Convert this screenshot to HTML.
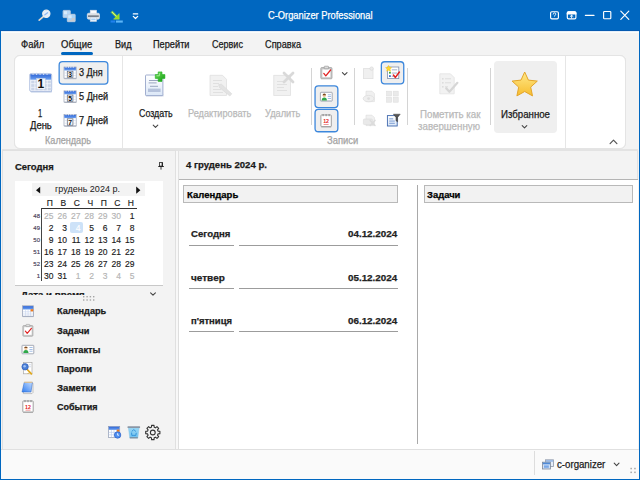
<!DOCTYPE html>
<html><head><meta charset="utf-8"><title>C-Organizer Professional</title>
<style>
html,body{margin:0;padding:0}
body{width:640px;height:480px;overflow:hidden;position:relative;background:#f3f3f3;font-family:"Liberation Sans",sans-serif;}
.a{position:absolute}
.t{position:absolute;white-space:nowrap;line-height:14px;height:14px;transform-origin:0 0;-webkit-text-stroke:0.25px currentColor}
.c{position:absolute;white-space:nowrap;line-height:14px;height:14px;color:#1a1a1a;-webkit-text-stroke:0.15px currentColor}
svg{position:absolute;overflow:visible}
</style></head><body>
<div class="a" style="left:0px;top:0px;width:640px;height:480px;background:#f3f3f3;"></div>
<div class="a" style="left:0px;top:0px;width:640px;height:31px;background:#0067c0;"></div>
<div class="a" style="left:0px;top:30px;width:640px;height:1px;background:#0559b0;"></div>
<div class="a" style="left:1px;top:31px;width:638px;height:1px;background:#e6eff9;"></div>
<div class="a" style="left:1px;top:32px;width:638px;height:1px;background:#fcfcfa;"></div>
<div class="a" style="left:61px;top:52px;width:32px;height:2.5px;background:#0067c0;border-radius:1.5px;"></div>
<div class="a" style="left:2px;top:149.2px;width:636px;height:1.8px;background:#e3e3e3;"></div>
<div class="a" style="left:13.5px;top:55px;width:612px;height:94.3px;background:#e0e0e0;border-radius:6px;"></div>
<div class="a" style="left:13.5px;top:55px;width:612px;height:93.5px;background:#ffffff;border:1px solid #e4e4e4;box-sizing:border-box;border-radius:6px;"></div>
<div class="a" style="left:122px;top:56px;width:1px;height:92px;background:#e6e6e6;"></div>
<div class="a" style="left:565px;top:56px;width:1px;height:92px;background:#e6e6e6;"></div>
<div class="a" style="left:310.5px;top:68px;width:1.2px;height:56.5px;background:#d4d4d4;"></div>
<div class="a" style="left:353.5px;top:68px;width:1.2px;height:56.5px;background:#d4d4d4;"></div>
<div class="a" style="left:407px;top:68px;width:1.2px;height:56.5px;background:#d4d4d4;"></div>
<div class="a" style="left:490px;top:68px;width:1.2px;height:56.5px;background:#d4d4d4;"></div>
<div class="a" style="left:493.75px;top:61px;width:63px;height:71.5px;background:#efefef;border-radius:4px;"></div>
<div class="a" style="left:2px;top:150px;width:174px;height:300px;background:#f3f3f3;border:1px solid #e0e0e0;box-sizing:border-box;"></div>
<div class="a" style="left:176px;top:151px;width:3px;height:299px;background:#f8f8f8;"></div>
<div class="a" style="left:14.5px;top:180.5px;width:148.5px;height:104.5px;background:#ffffff;"></div>
<div class="a" style="left:14.5px;top:285px;width:148.5px;height:1px;background:#c8c8c8;"></div>
<div class="a" style="left:31.5px;top:183px;width:113.5px;height:13.3px;background:#f3f3f3;"></div>
<div class="a" style="left:41px;top:208px;width:96px;height:1px;background:#333;"></div>
<div class="a" style="left:41px;top:208px;width:1px;height:73px;background:#444;"></div>
<div class="a" style="left:70px;top:222px;width:13px;height:11.2px;background:#cde2f8;border-radius:2px;"></div>
<div class="a" style="left:179px;top:151px;width:459px;height:29px;background:#f3f3f3;"></div>
<div class="a" style="left:178.4px;top:151px;width:1px;height:29px;background:#e2e2e2;"></div>
<div class="a" style="left:637.3px;top:151px;width:1px;height:299px;background:#e2e2e2;"></div>
<div class="a" style="left:179px;top:179px;width:459px;height:271px;background:#ffffff;"></div>
<div class="a" style="left:179px;top:179px;width:459px;height:1px;background:#b4b4b4;"></div>
<div class="a" style="left:178.4px;top:179px;width:1px;height:271px;background:#dedede;"></div>
<div class="a" style="left:183.2px;top:185.2px;width:214.6px;height:18.3px;background:#f2f2f2;border:1px solid #b9b9b9;box-sizing:border-box;"></div>
<div class="a" style="left:423.5px;top:185.2px;width:209.5px;height:18.3px;background:#f2f2f2;border:1px solid #b9b9b9;box-sizing:border-box;"></div>
<div class="a" style="left:416.5px;top:185.2px;width:1.6px;height:258.5px;background:#a9a9a9;"></div>
<div class="a" style="left:189px;top:245px;width:44.6px;height:1.1px;background:#9c9c9c;"></div>
<div class="a" style="left:239.4px;top:245px;width:158.4px;height:1.1px;background:#9c9c9c;"></div>
<div class="a" style="left:189px;top:288px;width:44.6px;height:1.1px;background:#9c9c9c;"></div>
<div class="a" style="left:239.4px;top:288px;width:158.4px;height:1.1px;background:#9c9c9c;"></div>
<div class="a" style="left:189px;top:331px;width:44.6px;height:1.1px;background:#9c9c9c;"></div>
<div class="a" style="left:239.4px;top:331px;width:158.4px;height:1.1px;background:#9c9c9c;"></div>
<div class="a" style="left:1px;top:450px;width:638px;height:29px;background:#fafafa;"></div>
<div class="a" style="left:1px;top:448.6px;width:638px;height:1.5px;background:#e0e0e0;"></div>
<div class="a" style="left:533.5px;top:451px;width:1px;height:23.5px;background:#dddddd;"></div>
<svg width="640" height="480" viewBox="0 0 640 480" style="left:0;top:0"><rect x="59.15" y="61.65" width="48.70" height="22.40" rx="3.35" fill="#efefef" stroke="#3c87dc" stroke-width="1.3"/><rect x="315.05" y="85.85" width="22.80" height="21.70" rx="3.35" fill="#efefef" stroke="#3c87dc" stroke-width="1.3"/><rect x="315.05" y="109.35" width="22.80" height="22.40" rx="3.35" fill="#efefef" stroke="#3c87dc" stroke-width="1.3"/><rect x="381.35" y="61.75" width="22.40" height="22.10" rx="3.35" fill="#efefef" stroke="#3c87dc" stroke-width="1.3"/></svg>
<div class="c" style="left:42.90px;top:196px;width:14px;text-align:center;font-size:8.5px">П</div>
<div class="c" style="left:56.40px;top:196px;width:14px;text-align:center;font-size:8.5px">В</div>
<div class="c" style="left:69.90px;top:196px;width:14px;text-align:center;font-size:8.5px">С</div>
<div class="c" style="left:83.40px;top:196px;width:14px;text-align:center;font-size:8.5px">Ч</div>
<div class="c" style="left:96.90px;top:196px;width:14px;text-align:center;font-size:8.5px">П</div>
<div class="c" style="left:110.40px;top:196px;width:14px;text-align:center;font-size:8.5px">С</div>
<div class="c" style="left:123.90px;top:196px;width:14px;text-align:center;font-size:8.5px">Н</div>
<div class="c" style="left:26px;top:209px;width:14px;text-align:right;font-size:6px;color:#4a4058">48</div>
<div class="c" style="left:33.50px;top:209px;width:20px;text-align:right;font-size:8.5px;color:#b4b4b4">25</div>
<div class="c" style="left:47.00px;top:209px;width:20px;text-align:right;font-size:8.5px;color:#b4b4b4">26</div>
<div class="c" style="left:60.50px;top:209px;width:20px;text-align:right;font-size:8.5px;color:#b4b4b4">27</div>
<div class="c" style="left:74.00px;top:209px;width:20px;text-align:right;font-size:8.5px;color:#b4b4b4">28</div>
<div class="c" style="left:87.50px;top:209px;width:20px;text-align:right;font-size:8.5px;color:#b4b4b4">29</div>
<div class="c" style="left:101.00px;top:209px;width:20px;text-align:right;font-size:8.5px;color:#b4b4b4">30</div>
<div class="c" style="left:114.50px;top:209px;width:20px;text-align:right;font-size:8.5px;color:#1a1a1a">1</div>
<div class="c" style="left:26px;top:221px;width:14px;text-align:right;font-size:6px;color:#4a4058">49</div>
<div class="c" style="left:33.50px;top:221px;width:20px;text-align:right;font-size:8.5px;color:#1a1a1a">2</div>
<div class="c" style="left:47.00px;top:221px;width:20px;text-align:right;font-size:8.5px;color:#1a1a1a">3</div>
<div class="c" style="left:60.50px;top:221px;width:20px;text-align:right;font-size:8.5px;color:#ffffff">4</div>
<div class="c" style="left:74.00px;top:221px;width:20px;text-align:right;font-size:8.5px;color:#1a1a1a">5</div>
<div class="c" style="left:87.50px;top:221px;width:20px;text-align:right;font-size:8.5px;color:#1a1a1a">6</div>
<div class="c" style="left:101.00px;top:221px;width:20px;text-align:right;font-size:8.5px;color:#1a1a1a">7</div>
<div class="c" style="left:114.50px;top:221px;width:20px;text-align:right;font-size:8.5px;color:#1a1a1a">8</div>
<div class="c" style="left:26px;top:233px;width:14px;text-align:right;font-size:6px;color:#4a4058">50</div>
<div class="c" style="left:33.50px;top:233px;width:20px;text-align:right;font-size:8.5px;color:#1a1a1a">9</div>
<div class="c" style="left:47.00px;top:233px;width:20px;text-align:right;font-size:8.5px;color:#1a1a1a">10</div>
<div class="c" style="left:60.50px;top:233px;width:20px;text-align:right;font-size:8.5px;color:#1a1a1a">11</div>
<div class="c" style="left:74.00px;top:233px;width:20px;text-align:right;font-size:8.5px;color:#1a1a1a">12</div>
<div class="c" style="left:87.50px;top:233px;width:20px;text-align:right;font-size:8.5px;color:#1a1a1a">13</div>
<div class="c" style="left:101.00px;top:233px;width:20px;text-align:right;font-size:8.5px;color:#1a1a1a">14</div>
<div class="c" style="left:114.50px;top:233px;width:20px;text-align:right;font-size:8.5px;color:#1a1a1a">15</div>
<div class="c" style="left:26px;top:245px;width:14px;text-align:right;font-size:6px;color:#4a4058">51</div>
<div class="c" style="left:33.50px;top:245px;width:20px;text-align:right;font-size:8.5px;color:#1a1a1a">16</div>
<div class="c" style="left:47.00px;top:245px;width:20px;text-align:right;font-size:8.5px;color:#1a1a1a">17</div>
<div class="c" style="left:60.50px;top:245px;width:20px;text-align:right;font-size:8.5px;color:#1a1a1a">18</div>
<div class="c" style="left:74.00px;top:245px;width:20px;text-align:right;font-size:8.5px;color:#1a1a1a">19</div>
<div class="c" style="left:87.50px;top:245px;width:20px;text-align:right;font-size:8.5px;color:#1a1a1a">20</div>
<div class="c" style="left:101.00px;top:245px;width:20px;text-align:right;font-size:8.5px;color:#1a1a1a">21</div>
<div class="c" style="left:114.50px;top:245px;width:20px;text-align:right;font-size:8.5px;color:#1a1a1a">22</div>
<div class="c" style="left:26px;top:257px;width:14px;text-align:right;font-size:6px;color:#4a4058">52</div>
<div class="c" style="left:33.50px;top:257px;width:20px;text-align:right;font-size:8.5px;color:#1a1a1a">23</div>
<div class="c" style="left:47.00px;top:257px;width:20px;text-align:right;font-size:8.5px;color:#1a1a1a">24</div>
<div class="c" style="left:60.50px;top:257px;width:20px;text-align:right;font-size:8.5px;color:#1a1a1a">25</div>
<div class="c" style="left:74.00px;top:257px;width:20px;text-align:right;font-size:8.5px;color:#1a1a1a">26</div>
<div class="c" style="left:87.50px;top:257px;width:20px;text-align:right;font-size:8.5px;color:#1a1a1a">27</div>
<div class="c" style="left:101.00px;top:257px;width:20px;text-align:right;font-size:8.5px;color:#1a1a1a">28</div>
<div class="c" style="left:114.50px;top:257px;width:20px;text-align:right;font-size:8.5px;color:#1a1a1a">29</div>
<div class="c" style="left:26px;top:269px;width:14px;text-align:right;font-size:6px;color:#4a4058">1</div>
<div class="c" style="left:33.50px;top:269px;width:20px;text-align:right;font-size:8.5px;color:#1a1a1a">30</div>
<div class="c" style="left:47.00px;top:269px;width:20px;text-align:right;font-size:8.5px;color:#1a1a1a">31</div>
<div class="c" style="left:60.50px;top:269px;width:20px;text-align:right;font-size:8.5px;color:#b4b4b4">1</div>
<div class="c" style="left:74.00px;top:269px;width:20px;text-align:right;font-size:8.5px;color:#b4b4b4">2</div>
<div class="c" style="left:87.50px;top:269px;width:20px;text-align:right;font-size:8.5px;color:#b4b4b4">3</div>
<div class="c" style="left:101.00px;top:269px;width:20px;text-align:right;font-size:8.5px;color:#b4b4b4">4</div>
<div class="c" style="left:114.50px;top:269px;width:20px;text-align:right;font-size:8.5px;color:#b4b4b4">5</div>
<div class="t" style="left:268.00px;top:8.84px;font-size:10px;transform:scaleX(0.9308);color:#ffffff;">C-Organizer Professional</div>
<div class="t" style="left:20.50px;top:37.53px;font-size:10px;transform:scaleX(0.9454);color:#1a1a1a;">Файл</div>
<div class="t" style="left:61.25px;top:37.53px;font-size:10px;transform:scaleX(0.9501);color:#1a1a1a;">Общие</div>
<div class="t" style="left:114.50px;top:37.53px;font-size:10px;transform:scaleX(0.9119);color:#1a1a1a;">Вид</div>
<div class="t" style="left:152.70px;top:37.53px;font-size:10px;transform:scaleX(0.9211);color:#1a1a1a;">Перейти</div>
<div class="t" style="left:211.70px;top:37.53px;font-size:10px;transform:scaleX(0.9022);color:#1a1a1a;">Сервис</div>
<div class="t" style="left:265.10px;top:37.53px;font-size:10px;transform:scaleX(0.9176);color:#1a1a1a;">Справка</div>
<div class="t" style="left:79.30px;top:66.03px;font-size:10px;transform:scaleX(0.9094);color:#1a1a1a;">3 Дня</div>
<div class="t" style="left:79.30px;top:89.94px;font-size:10px;transform:scaleX(0.9152);color:#1a1a1a;">5 Дней</div>
<div class="t" style="left:79.30px;top:113.73px;font-size:10px;transform:scaleX(0.9152);color:#1a1a1a;">7 Дней</div>
<div class="t" style="left:38.30px;top:107.13px;font-size:10px;transform:scaleX(0.7500);color:#1a1a1a;">1</div>
<div class="t" style="left:29.80px;top:119.44px;font-size:10px;transform:scaleX(0.9446);color:#1a1a1a;">День</div>
<div class="t" style="left:45.20px;top:133.53px;font-size:10px;transform:scaleX(0.9112);color:#a3a3a3;">Календарь</div>
<div class="t" style="left:139.00px;top:107.03px;font-size:10px;transform:scaleX(0.8865);color:#1a1a1a;">Создать</div>
<div class="t" style="left:187.80px;top:107.03px;font-size:10px;transform:scaleX(0.9164);color:#b9b9b9;">Редактировать</div>
<div class="t" style="left:265.20px;top:107.03px;font-size:10px;transform:scaleX(0.9244);color:#b9b9b9;">Удалить</div>
<div class="t" style="left:326.80px;top:133.53px;font-size:10px;transform:scaleX(0.9397);color:#a3a3a3;">Записи</div>
<div class="t" style="left:419.50px;top:107.83px;font-size:10px;transform:scaleX(0.9738);color:#b9b9b9;">Пометить как</div>
<div class="t" style="left:418.00px;top:119.94px;font-size:10px;transform:scaleX(0.9747);color:#b9b9b9;">завершенную</div>
<div class="t" style="left:501.00px;top:107.83px;font-size:10px;transform:scaleX(0.9667);color:#1a1a1a;">Избранное</div>
<div class="t" style="left:15.30px;top:160.07px;font-size:9.6px;transform:scaleX(0.9832);color:#1a1a1a;font-weight:bold;">Сегодня</div>
<div class="t" style="left:54.75px;top:182.48px;font-size:9px;transform:scaleX(1.0016);color:#1a1a1a;-webkit-text-stroke:0;">грудень 2024 р.</div>
<div class="a" style="left:20.50px;top:286px;width:67.8px;height:9.199999999999989px;overflow:hidden"><div class="t" style="left:0px;top:1.50px;font-size:9.8px;transform:scaleX(0.9893);color:#1a1a1a;font-weight:bold;">Дата и время</div></div>
<div class="t" style="left:57.00px;top:304.48px;font-size:9px;transform:scaleX(1.0174);color:#1a1a1a;font-weight:bold;">Календарь</div>
<div class="t" style="left:57.00px;top:323.58px;font-size:9px;transform:scaleX(1.0186);color:#1a1a1a;font-weight:bold;">Задачи</div>
<div class="t" style="left:57.00px;top:342.68px;font-size:9px;transform:scaleX(1.0247);color:#1a1a1a;font-weight:bold;">Контакты</div>
<div class="t" style="left:57.00px;top:361.88px;font-size:9px;transform:scaleX(1.0448);color:#1a1a1a;font-weight:bold;">Пароли</div>
<div class="t" style="left:57.00px;top:381.08px;font-size:9px;transform:scaleX(1.0712);color:#1a1a1a;font-weight:bold;">Заметки</div>
<div class="t" style="left:57.00px;top:400.18px;font-size:9px;transform:scaleX(1.0015);color:#1a1a1a;font-weight:bold;">События</div>
<div class="t" style="left:186.30px;top:158.47px;font-size:9.6px;transform:scaleX(0.9968);color:#1a1a1a;font-weight:bold;">4 грудень 2024 р.</div>
<div class="t" style="left:186.75px;top:187.71px;font-size:9.5px;transform:scaleX(1.0031);color:#000;font-weight:bold;">Календарь</div>
<div class="t" style="left:427.00px;top:187.71px;font-size:9.5px;transform:scaleX(0.9919);color:#000;font-weight:bold;">Задачи</div>
<div class="t" style="left:190.60px;top:227.41px;font-size:9.5px;transform:scaleX(1.0111);color:#222;font-weight:bold;">Сегодня</div>
<div class="t" style="left:347.75px;top:227.41px;font-size:9.5px;transform:scaleX(1.0337);color:#222;font-weight:bold;">04.12.2024</div>
<div class="t" style="left:190.60px;top:270.56px;font-size:9.5px;transform:scaleX(1.0516);color:#222;font-weight:bold;">четвер</div>
<div class="t" style="left:347.75px;top:270.56px;font-size:9.5px;transform:scaleX(1.0337);color:#222;font-weight:bold;">05.12.2024</div>
<div class="t" style="left:190.60px;top:313.71px;font-size:9.5px;transform:scaleX(0.9962);color:#222;font-weight:bold;">п'ятниця</div>
<div class="t" style="left:347.75px;top:313.71px;font-size:9.5px;transform:scaleX(1.0337);color:#222;font-weight:bold;">06.12.2024</div>
<div class="t" style="left:556.70px;top:457.74px;font-size:10px;transform:scaleX(0.9654);color:#1a1a1a;">c-organizer</div>
<svg class="ov" width="640" height="480" viewBox="0 0 640 480" style="left:0;top:0">
<defs>
<linearGradient id="gBlueH" x1="0" y1="0" x2="0" y2="1"><stop offset="0" stop-color="#2f66d6"/><stop offset="1" stop-color="#6b9ff0"/></linearGradient>
<linearGradient id="gDoc" x1="0" y1="0" x2="0" y2="1"><stop offset="0" stop-color="#ffffff"/><stop offset="1" stop-color="#dbe7f7"/></linearGradient>
<linearGradient id="gStar" x1="0" y1="0" x2="0" y2="1"><stop offset="0" stop-color="#ffe98a"/><stop offset="1" stop-color="#f7bd2e"/></linearGradient>
<linearGradient id="gNote" x1="0" y1="1" x2="1" y2="0"><stop offset="0" stop-color="#2f7df0"/><stop offset="1" stop-color="#c4dcff"/></linearGradient>
<linearGradient id="gGreen" x1="0" y1="0" x2="1" y2="1"><stop offset="0" stop-color="#6fdc5a"/><stop offset="1" stop-color="#129c12"/></linearGradient>
<linearGradient id="gBin" x1="0" y1="0" x2="0" y2="1"><stop offset="0" stop-color="#9ad8f6"/><stop offset="1" stop-color="#6fc0ee"/></linearGradient>
</defs>

<!-- ===== title bar: quick access ===== -->
<g id="i-search">
 <line x1="39.2" y1="20.1" x2="43.3" y2="16.6" stroke="#dcd6ce" stroke-width="1.7" stroke-linecap="round"/>
 <circle cx="46.3" cy="13.8" r="3.6" fill="#e3eefb" stroke="#ececec" stroke-width="1.2"/>
 <path d="M44.9 14.8 L47.6 12.8" stroke="#8db6ee" stroke-width="1.3" stroke-linecap="round"/>
</g>
<g id="i-copy">
 <rect x="63.1" y="10.4" width="7.2" height="7.2" rx="0.6" fill="#b4d8f8" stroke="#c4cede" stroke-width="0.8"/>
 <rect x="64" y="11.2" width="3" height="3" fill="#d8ecfc"/>
 <rect x="67.3" y="14.3" width="7.9" height="7.4" rx="0.6" fill="#a9d3f7" stroke="#c8d0dc" stroke-width="0.8"/>
 <rect x="68.2" y="15.2" width="3.4" height="3" fill="#d4eafc"/>
 <path d="M71.6 18 h3.2 v3.3 h-5.6 v-1.4 h2.4 z" fill="#c9cbd0"/>
</g>
<g id="i-print">
 <rect x="90.2" y="10.2" width="6.4" height="3.6" fill="#fafbfd" stroke="#cfd6e2" stroke-width="0.6"/>
 <rect x="87.3" y="13.2" width="12.2" height="6" rx="1.4" fill="#dcdfe4" stroke="#eceef2" stroke-width="0.6"/>
 <rect x="88" y="15.4" width="10.8" height="1.5" fill="#6d7682"/>
 <rect x="90.2" y="17.3" width="6.4" height="4.2" fill="#eef6fe" stroke="#c2ccdc" stroke-width="0.6"/>
 <rect x="91.2" y="18.6" width="4.4" height="1.6" fill="#a9d0f6"/>
</g>
<g id="i-arrow">
 <path d="M111.1 12.4 L112.4 11.1 L117 15.7 L119.2 13.5 L119.3 19.3 L113.5 19.2 L115.7 17 Z" fill="#98dc24" stroke="#b8ea50" stroke-width="0.4" stroke-linejoin="round"/>
 <path d="M112.2 12.2 L116.2 16.2" stroke="#d9f59a" stroke-width="0.8" stroke-linecap="round"/>
 <rect x="110.6" y="20.5" width="4.6" height="2.1" fill="#1f80ec"/>
 <rect x="116" y="20.5" width="6.8" height="2.1" fill="#5db6f8"/>
</g>
<g id="i-qdrop" stroke="#ffffff" stroke-width="1.2" fill="none" stroke-linecap="round" stroke-linejoin="round">
 <line x1="133.3" y1="13.9" x2="137.7" y2="13.9"/>
 <polyline points="133.3,16.3 135.5,18.5 137.7,16.3"/>
</g>

<!-- ===== title bar: window buttons ===== -->
<g stroke="#ffffff" stroke-width="1.15" fill="none" stroke-linecap="round" stroke-linejoin="round">
 <rect x="550.6" y="11.7" width="7.8" height="7.2" rx="1.3"/>
 <path d="M553.2 14.1 a1.3 1.2 0 1 1 1.9 1.1 q-0.6 0.3 -0.6 0.9" stroke-width="0.95"/>
 <rect x="567.3" y="11.7" width="8.6" height="7.2" rx="1.3"/>
 <path d="M567.3 13.9 V13 a1.3 1.3 0 0 1 1.3 -1.3 h6 a1.3 1.3 0 0 1 1.3 1.3 V13.9 Z" fill="#ffffff"/>
 <path d="M571.6 18 V15.3 M570.2 16.5 L571.6 15.2 L573 16.5" stroke-width="0.9"/>
 <line x1="585.4" y1="15.4" x2="594" y2="15.4"/>
 <rect x="603.6" y="11.5" width="7.2" height="7.2" rx="0.8"/>
 <path d="M620.8 11.2 L628.8 19.3 M628.8 11.2 L620.8 19.3"/>
</g>

<!-- ===== ribbon: big day icon ===== -->
<g id="i-day1">
 <rect x="30.6" y="90.6" width="21.4" height="2" rx="0.8" fill="#bccbe6"/>
 <rect x="29.7" y="73.6" width="22" height="17.8" rx="1.4" fill="#f4f7fc" stroke="#a3b6da" stroke-width="0.8"/>
 <rect x="30.3" y="74.3" width="20.8" height="5.4" fill="url(#gBlueH)"/>
 <g fill="#cbd5e8"><rect x="31.2" y="80.6" width="3.3" height="2.8"/><rect x="31.2" y="84.1" width="3.3" height="2.8"/><rect x="31.2" y="87.6" width="3.3" height="2.8"/><rect x="35.3" y="80.6" width="3.3" height="2.8"/><rect x="35.3" y="84.1" width="3.3" height="2.8"/><rect x="35.3" y="87.6" width="3.3" height="2.8"/><rect x="39.4" y="80.6" width="3.3" height="2.8"/><rect x="39.4" y="84.1" width="3.3" height="2.8"/><rect x="39.4" y="87.6" width="3.3" height="2.8"/><rect x="43.5" y="80.6" width="3.3" height="2.8"/><rect x="43.5" y="84.1" width="3.3" height="2.8"/><rect x="43.5" y="87.6" width="3.3" height="2.8"/><rect x="47.6" y="80.6" width="3.3" height="2.8"/><rect x="47.6" y="84.1" width="3.3" height="2.8"/><rect x="47.6" y="87.6" width="3.3" height="2.8"/></g>
 <rect x="36.6" y="78.4" width="8.6" height="10.8" fill="#f3f6fb" stroke="#c2cde2" stroke-width="0.5"/>
 <text x="40.9" y="88.4" font-family="Liberation Sans, sans-serif" font-weight="bold" font-size="12" text-anchor="middle" fill="#111">1</text>
 <g fill="#c9d8f2"><rect x="32.5" y="72.8" width="1.1" height="2.2"/><rect x="36" y="72.8" width="1.1" height="2.2"/><rect x="39.5" y="72.8" width="1.1" height="2.2"/><rect x="43" y="72.8" width="1.1" height="2.2"/><rect x="46.5" y="72.8" width="1.1" height="2.2"/></g>
</g>
</g>
<g id="i-day3">
 <rect x="64.3" y="77.6" width="12" height="1.6" fill="#b4b9c4"/>
 <rect x="64" y="67.0" width="12.2" height="11.2" fill="#ffffff" stroke="#9aa3b6" stroke-width="0.7"/>
 <rect x="64.3" y="67.3" width="11.6" height="3.2" fill="url(#gBlueH)"/>
 <g stroke="#cfd8e8" stroke-width="0.6"><line x1="64.4" y1="73.0" x2="76" y2="73.0"/><line x1="64.4" y1="75.6" x2="76" y2="75.6"/><line x1="67" y1="70.6" x2="67" y2="78.0"/><line x1="73.2" y1="70.6" x2="73.2" y2="78.0"/></g>
 <rect x="67.3" y="71.2" width="5.6" height="6.4" fill="#f4f6fa" stroke="#555d6e" stroke-width="0.6"/>
 <text x="70.1" y="77.1" font-family="Liberation Sans, sans-serif" font-weight="bold" font-size="6.8" text-anchor="middle" fill="#111">3</text>
 <g fill="#e4ebf8"><rect x="65.6" y="66.2" width="0.9" height="1.6"/><rect x="68" y="66.2" width="0.9" height="1.6"/><rect x="70.4" y="66.2" width="0.9" height="1.6"/><rect x="72.8" y="66.2" width="0.9" height="1.6"/></g>
</g>
<g id="i-day5">
 <rect x="64.3" y="101.4" width="12" height="1.6" fill="#b4b9c4"/>
 <rect x="64" y="90.8" width="12.2" height="11.2" fill="#ffffff" stroke="#9aa3b6" stroke-width="0.7"/>
 <rect x="64.3" y="91.1" width="11.6" height="3.2" fill="url(#gBlueH)"/>
 <g stroke="#cfd8e8" stroke-width="0.6"><line x1="64.4" y1="96.8" x2="76" y2="96.8"/><line x1="64.4" y1="99.4" x2="76" y2="99.4"/><line x1="67" y1="94.4" x2="67" y2="101.8"/><line x1="73.2" y1="94.4" x2="73.2" y2="101.8"/></g>
 <rect x="67.3" y="95.0" width="5.6" height="6.4" fill="#f4f6fa" stroke="#555d6e" stroke-width="0.6"/>
 <text x="70.1" y="100.9" font-family="Liberation Sans, sans-serif" font-weight="bold" font-size="6.8" text-anchor="middle" fill="#111">5</text>
 <g fill="#e4ebf8"><rect x="65.6" y="90.0" width="0.9" height="1.6"/><rect x="68" y="90.0" width="0.9" height="1.6"/><rect x="70.4" y="90.0" width="0.9" height="1.6"/><rect x="72.8" y="90.0" width="0.9" height="1.6"/></g>
</g>
<g id="i-day7">
 <rect x="64.3" y="125.2" width="12" height="1.6" fill="#b4b9c4"/>
 <rect x="64" y="114.6" width="12.2" height="11.2" fill="#ffffff" stroke="#9aa3b6" stroke-width="0.7"/>
 <rect x="64.3" y="114.9" width="11.6" height="3.2" fill="url(#gBlueH)"/>
 <g stroke="#cfd8e8" stroke-width="0.6"><line x1="64.4" y1="120.6" x2="76" y2="120.6"/><line x1="64.4" y1="123.2" x2="76" y2="123.2"/><line x1="67" y1="118.2" x2="67" y2="125.6"/><line x1="73.2" y1="118.2" x2="73.2" y2="125.6"/></g>
 <rect x="67.3" y="118.8" width="5.6" height="6.4" fill="#f4f6fa" stroke="#555d6e" stroke-width="0.6"/>
 <text x="70.1" y="124.7" font-family="Liberation Sans, sans-serif" font-weight="bold" font-size="6.8" text-anchor="middle" fill="#111">7</text>
 <g fill="#e4ebf8"><rect x="65.6" y="113.8" width="0.9" height="1.6"/><rect x="68" y="113.8" width="0.9" height="1.6"/><rect x="70.4" y="113.8" width="0.9" height="1.6"/><rect x="72.8" y="113.8" width="0.9" height="1.6"/></g>
</g>
<!-- ===== ribbon: create / edit / delete ===== -->
<g id="i-create">
 <rect x="146" y="94.6" width="17.6" height="1.8" fill="#c2cbe0" opacity="0.8"/>
 <rect x="145.5" y="75" width="17.4" height="20.6" rx="0.8" fill="url(#gDoc)" stroke="#97a6c9" stroke-width="0.9"/>
 <g fill="#9aa6c0"><rect x="149" y="80" width="10" height="1"/><rect x="148.6" y="82.4" width="8" height="1"/><rect x="150" y="85.8" width="8" height="1"/></g>
 <rect x="148" y="88.6" width="12.6" height="3.4" fill="#b5c2dc"/>
 <path d="M158.2 71.9 h3.8 v2.7 h2.9 v3.8 h-2.9 v3 h-3.8 v-3 h-2.9 v-3.8 h2.9 z" fill="url(#gGreen)" stroke="#1fae1f" stroke-width="0.6" stroke-linejoin="round"/>
 <path d="M159.4 73.2 v2.6 h-2.8" stroke="#b6f2a6" stroke-width="0.8" fill="none"/>
</g>
<g id="i-edit">
 <path d="M210 75.3 h12.5 l4 4 v16.2 h-16.5 z" fill="#f1f1f1" stroke="#e0e0e0" stroke-width="0.8"/>
 <g fill="#e0e0e0"><rect x="213" y="80" width="9" height="1"/><rect x="213" y="83" width="6" height="1"/><rect x="213" y="86" width="5" height="1"/><rect x="213" y="89" width="8" height="1"/><rect x="213" y="92" width="10" height="1"/></g>
 <path d="M218.6 84.6 L221.4 84.2 L231.8 93.8 L229.8 96 L219.4 87.4 Z" fill="#e3e3e3" stroke="#d9d9d9" stroke-width="0.6"/>
</g>
<g id="i-del">
 <rect x="273.8" y="75.3" width="16.6" height="20.2" fill="#f1f1f1" stroke="#e0e0e0" stroke-width="0.8"/>
 <g fill="#e0e0e0"><rect x="277" y="81" width="8" height="1"/><rect x="277" y="84" width="10" height="1"/><rect x="277" y="87" width="7" height="1"/><rect x="277" y="90" width="10" height="1"/></g>
 <path d="M284 73 L293 82 M293 73 L284 82" stroke="#d9d9d9" stroke-width="2.8" stroke-linecap="round"/>
</g>
<g stroke="#444" stroke-width="1.1" fill="none" stroke-linecap="round" stroke-linejoin="round">
 <polyline points="153.2,125.2 155.5,127.4 157.8,125.2"/>
 <polyline points="522.2,125.6 524.5,127.8 526.8,125.6"/>
 <polyline points="342.4,72.6 344.7,74.8 347,72.6"/>
 <polyline points="610.1,143.6 613.5,140.2 616.9,143.6" stroke="#555" stroke-width="1.2"/>
 <polyline points="614.2,463.2 616.6,465.6 619,463.2"/>
 <polyline points="150.6,292.8 153,295.2 155.4,292.8"/>
</g>

<!-- ===== ribbon: records ===== -->
<g id="i-clip">
 <rect x="320.8" y="67.6" width="11.2" height="11.2" rx="0.8" fill="#c9c9c9" stroke="#9a9a9a" stroke-width="0.7"/>
 <rect x="322.4" y="69.4" width="8" height="7.8" fill="#ffffff"/>
 <rect x="324.2" y="66.2" width="4.4" height="2.6" rx="0.6" fill="#dcdcdc" stroke="#8f8f8f" stroke-width="0.6"/>
 <path d="M323.8 73.4 L325.8 75.8 L330.6 70" stroke="#e02020" stroke-width="1.25" fill="none" stroke-linecap="round" stroke-linejoin="round"/>
</g>
<g id="i-contact">
 <rect x="320.4" y="92.3" width="11.8" height="8.8" rx="0.6" fill="#ffffff" stroke="#8f96a3" stroke-width="0.8"/>
 <rect x="320.9" y="100.4" width="10.8" height="1.1" fill="#c4c9d2"/>
 <circle cx="324.3" cy="95.6" r="1.6" fill="#f0c9a0"/>
 <path d="M322.6 95.3 a1.7 1.7 0 0 1 3.4 0 z" fill="#7a4a20"/>
 <path d="M321.7 100.4 q0 -3 2.6 -3 q2.6 0 2.6 3 z" fill="#2fa84a"/>
 <g fill="#8fb0e0"><rect x="327.8" y="94.4" width="3.2" height="0.8"/><rect x="327.8" y="96.2" width="3.2" height="0.8"/><rect x="327.8" y="98" width="3.2" height="0.8"/></g>
</g>
<g id="i-event">
 <rect x="321.2" y="126.3" width="10" height="1.2" fill="#b8b8b8"/>
 <rect x="320.9" y="115" width="10.4" height="11.6" rx="0.6" fill="#ffffff" stroke="#8c8c8c" stroke-width="0.8"/>
 <g fill="#8a8a8a"><rect x="322.6" y="114" width="1" height="2.2"/><rect x="325.6" y="114" width="1" height="2.2"/><rect x="328.6" y="114" width="1" height="2.2"/></g>
 <text x="326.1" y="123.4" font-family="Liberation Sans, sans-serif" font-weight="bold" font-size="5.9" text-anchor="middle" fill="#e31b23" textLength="5.8" lengthAdjust="spacingAndGlyphs">12</text>
 <rect x="323.6" y="124.1" width="5" height="0.9" fill="#f08a8a"/>
</g>
<g id="i-dis1">
 <rect x="363.4" y="68.6" width="9.6" height="10" fill="#f0f0f0" stroke="#e0e0e0" stroke-width="0.8"/>
 <circle cx="371.6" cy="68.6" r="1.7" fill="#ececec" stroke="#d8d8d8" stroke-width="0.7"/>
</g>
<g id="i-dis2">
 <path d="M366 91.2 h6 l2.4 2.4 v8 h-8.4 z" fill="#f0f0f0" stroke="#e0e0e0" stroke-width="0.7"/>
 <ellipse cx="368.6" cy="98.6" rx="5.4" ry="3.2" fill="#efefef" stroke="#dddddd" stroke-width="0.8"/>
 <circle cx="368.6" cy="98.6" r="1.4" fill="#dedede"/>
</g>
<g id="i-dis3">
 <path d="M366 115.2 h6 l2.4 2.4 v8 h-8.4 z" fill="#f0f0f0" stroke="#e0e0e0" stroke-width="0.7"/>
 <rect x="363.4" y="119" width="9" height="5.6" rx="1" fill="#e9e9e9" stroke="#dadada" stroke-width="0.6"/>
 <path d="M370.2 120.4 L375 125.4 M375 120.4 L370.2 125.4" stroke="#dcdcdc" stroke-width="1.5" stroke-linecap="round"/>
</g>
<g id="i-check">
 <rect x="387.6" y="67" width="11.2" height="11.6" fill="#ffffff" stroke="#7f8fae" stroke-width="0.8"/>
 <g fill="#9aa7c2"><rect x="391.8" y="69.4" width="5.4" height="0.9"/><rect x="391.8" y="72.6" width="5.4" height="0.9"/><rect x="391.8" y="75.8" width="3" height="0.9"/></g>
 <rect x="389" y="71.8" width="1.8" height="1.8" fill="#38a838"/><rect x="389" y="75.2" width="1.8" height="1.8" fill="#3a70d0"/>
 <path d="M388.6 65.4 l0.9 1.9 l2.1 0.3 l-1.5 1.5 l0.4 2.1 l-1.9 -1 l-1.9 1 l0.4 -2.1 l-1.5 -1.5 l2.1 -0.3 z" fill="#ffd92e" stroke="#f0b400" stroke-width="0.4"/>
 <path d="M393.4 75 L395.4 77.4 L399.4 72" stroke="#e02020" stroke-width="1.5" fill="none" stroke-linecap="round" stroke-linejoin="round"/>
</g>
<g id="i-grid" fill="#eaeaea" stroke="#dedede" stroke-width="0.6">
 <rect x="386.6" y="91.2" width="5" height="4.8"/><rect x="393.2" y="91.2" width="5" height="4.8"/>
 <rect x="386.6" y="97.4" width="5" height="4.8"/><rect x="393.2" y="97.4" width="5" height="4.8"/>
</g>
<g id="i-filter">
 <rect x="387.4" y="115.6" width="9.8" height="10.4" fill="url(#gDoc)" stroke="#3f68ad" stroke-width="0.9"/>
 <g fill="#6f93cf"><rect x="389.2" y="118.4" width="4" height="0.9"/><rect x="389.2" y="120.6" width="5.6" height="0.9"/><rect x="389.2" y="122.8" width="5.6" height="0.9"/></g>
 <path d="M393.4 114.2 h6.8 l-2.6 3.2 v4.4 l-1.6 -1 v-3.4 z" fill="#555" stroke="#3a3a3a" stroke-width="0.5" stroke-linejoin="round"/>
</g>
<g id="i-mark">
 <path d="M439.8 73.8 h10.6 l3.8 3.8 v16.2 h-14.4 z" fill="#f2f2f2" stroke="#e2e2e2" stroke-width="0.8"/>
 <g fill="#dddddd"><rect x="442" y="78" width="1.6" height="1.6"/><rect x="442" y="82" width="1.6" height="1.6"/><rect x="442" y="86" width="1.6" height="1.6"/><rect x="445" y="78.3" width="6" height="1"/><rect x="445" y="82.3" width="6" height="1"/><rect x="445" y="86.3" width="3" height="1"/></g>
 <path d="M446.2 88.2 L449.4 91.8 L457.4 82.8" stroke="#d6d6d6" stroke-width="2.2" fill="none" stroke-linecap="round" stroke-linejoin="round"/>
</g>
<g id="i-star">
 <path d="M524.7 72.0 L528.4 80.1 L537.3 81.1 L530.7 87.1 L532.5 95.9 L524.7 91.5 L516.9 95.9 L518.7 87.1 L512.1 81.1 L521.0 80.1 Z" fill="url(#gStar)" stroke="#e3a52a" stroke-width="1" stroke-linejoin="round"/>
</g>

<!-- ===== left panel ===== -->
<g id="i-pin" stroke="#222" fill="none">
 <rect x="159.5" y="162.6" width="3" height="3.5" stroke-width="0.8"/>
 <line x1="162.3" y1="162.4" x2="162.3" y2="166.2" stroke-width="1.3"/>
 <line x1="158.3" y1="166.5" x2="163.8" y2="166.5" stroke-width="1"/>
 <line x1="161" y1="166.8" x2="161" y2="169.6" stroke-width="0.9"/>
</g>
<path d="M40.2 186.8 L40.2 193.6 L36 190.2 Z" fill="#111"/>
<path d="M136.2 186.6 L136.2 193.8 L140.4 190.2 Z" fill="#111"/>
<g fill="#a4a4a4"><rect x="83.0" y="296.0" width="1.4" height="1.4"/><rect x="86.4" y="296.0" width="1.4" height="1.4"/><rect x="89.7" y="296.0" width="1.4" height="1.4"/><rect x="93.0" y="296.0" width="1.4" height="1.4"/><rect x="83.0" y="299.3" width="1.4" height="1.4"/><rect x="86.4" y="299.3" width="1.4" height="1.4"/><rect x="89.7" y="299.3" width="1.4" height="1.4"/><rect x="93.0" y="299.3" width="1.4" height="1.4"/></g>
<g id="n-cal">
 <rect x="22.8" y="316" width="10.8" height="1.1" fill="#b9c0cc"/>
 <rect x="22.6" y="305.8" width="10.8" height="10.4" fill="#ffffff" stroke="#8f9ab2" stroke-width="0.7"/>
 <rect x="22.9" y="306.1" width="10.2" height="3.4" fill="url(#gBlueH)"/>
 <g stroke="#c3d2ec" stroke-width="0.6"><line x1="25.6" y1="309.6" x2="25.6" y2="316"/><line x1="28.1" y1="309.6" x2="28.1" y2="316"/><line x1="30.6" y1="309.6" x2="30.6" y2="316"/><line x1="23" y1="311.8" x2="33" y2="311.8"/><line x1="23" y1="314" x2="33" y2="314"/></g>
 <rect x="30.6" y="309.2" width="2.6" height="2.2" fill="#f07a1a"/>
</g>
<g id="n-task">
 <rect x="22.9" y="325.6" width="10" height="10.6" rx="0.8" fill="#cfcfcf" stroke="#9c9c9c" stroke-width="0.7"/>
 <rect x="24.2" y="327.2" width="7.4" height="7.6" fill="#ffffff"/>
 <rect x="26" y="324.4" width="3.8" height="2.2" rx="0.5" fill="#e0e0e0" stroke="#909090" stroke-width="0.5"/>
 <path d="M25.4 331.2 L27.2 333.4 L31.4 328.4" stroke="#e02020" stroke-width="1.15" fill="none" stroke-linecap="round" stroke-linejoin="round"/>
</g>
<g id="n-contact">
 <rect x="22" y="345.3" width="11.8" height="8.4" rx="0.6" fill="#ffffff" stroke="#8f96a3" stroke-width="0.8"/>
 <rect x="22.5" y="353.2" width="10.8" height="1" fill="#c4c9d2"/>
 <circle cx="25.9" cy="348.4" r="1.6" fill="#f0c9a0"/>
 <path d="M24.2 348.1 a1.7 1.7 0 0 1 3.4 0 z" fill="#7a4a20"/>
 <path d="M23.3 353 q0 -3 2.6 -3 q2.6 0 2.6 3 z" fill="#2fa84a"/>
 <g fill="#8fb0e0"><rect x="29.4" y="347.2" width="3.2" height="0.8"/><rect x="29.4" y="349" width="3.2" height="0.8"/><rect x="29.4" y="350.8" width="3.2" height="0.8"/></g>
</g>
<g id="n-pass">
 <rect x="23.4" y="362.4" width="8.6" height="11.4" fill="#ffffff" stroke="#a9a9a9" stroke-width="0.7"/>
 <g fill="#c9d3e6"><rect x="28.6" y="364.4" width="2.4" height="0.8"/><rect x="28.6" y="366.4" width="2.4" height="0.8"/></g>
 <path d="M26.8 369 L31.4 373.8" stroke="#e0a820" stroke-width="1.8" stroke-linecap="round"/>
 <path d="M29 372.6 l-1.2 1.2" stroke="#e0a820" stroke-width="1"/>
 <circle cx="25.1" cy="366.8" r="3.2" fill="#4a80d8" stroke="#2f5cb8" stroke-width="0.7"/>
 <circle cx="24.6" cy="366.3" r="1.2" fill="#9fc0f4"/>
</g>
<g id="n-note">
 <path d="M24.6 383.2 h8.4 v9.4 l-1 1 h-8.6 z" fill="#f1f1f1" stroke="#a4a4a4" stroke-width="0.6"/>
 <path d="M24.2 382.4 h8.2 l-1.4 9.6 h-9 z" fill="url(#gNote)" stroke="#2a66c8" stroke-width="0.5"/>
 <rect x="24.2" y="381.7" width="8.2" height="1.1" fill="#e8c48a"/>
</g>
<g id="n-event">
 <rect x="23.1" y="411.7" width="10" height="1.1" fill="#b8b8b8"/>
 <rect x="22.8" y="401" width="10.4" height="11" rx="0.6" fill="#ffffff" stroke="#8c8c8c" stroke-width="0.8"/>
 <g fill="#8a8a8a"><rect x="24.5" y="400" width="1" height="2.2"/><rect x="27.5" y="400" width="1" height="2.2"/><rect x="30.5" y="400" width="1" height="2.2"/></g>
 <text x="28" y="409" font-family="Liberation Sans, sans-serif" font-weight="bold" font-size="5.9" text-anchor="middle" fill="#e31b23" textLength="5.8" lengthAdjust="spacingAndGlyphs">12</text>
 <rect x="25.5" y="409.7" width="5" height="0.9" fill="#f08a8a"/>
</g>
<g id="b-cal">
 <rect x="108.5" y="426.4" width="11.2" height="11.2" fill="#ffffff" stroke="#8f9ab2" stroke-width="0.7"/>
 <rect x="108.8" y="426.7" width="10.6" height="3.2" fill="url(#gBlueH)"/>
 <g stroke="#b4c8ec" stroke-width="0.6"><line x1="111.4" y1="430" x2="111.4" y2="437.4"/><line x1="114" y1="430" x2="114" y2="437.4"/><line x1="116.6" y1="430" x2="116.6" y2="437.4"/><line x1="108.8" y1="432.4" x2="119.4" y2="432.4"/><line x1="108.8" y1="434.8" x2="119.4" y2="434.8"/></g>
 <rect x="116.8" y="429.6" width="2.6" height="2.2" fill="#f07a1a"/>
 <circle cx="117.6" cy="435" r="3.2" fill="#4f8ff0" stroke="#2c5fc4" stroke-width="0.7"/>
 <path d="M117.6 433.2 V435.2 H119" stroke="#ffffff" stroke-width="0.8" fill="none"/>
</g>
<g id="b-bin">
 <path d="M128.4 427.8 H139.2 L137.8 438 H129.8 Z" fill="url(#gBin)" stroke="#8fc6e6" stroke-width="0.5"/>
 <rect x="127.5" y="426.3" width="12.6" height="1.7" rx="0.5" fill="#8b97a6"/>
 <rect x="129.8" y="437.2" width="8" height="1.2" fill="#7d8a98"/>
 <path d="M132 431.2 l1.8 -1.6 l1.8 1.6 M136.2 433.2 l-0.4 2.2 h-2 M131.6 433 l0.2 2.4 h1.4" stroke="#2f8ed8" stroke-width="0.9" fill="none" stroke-linecap="round" stroke-linejoin="round"/>
</g>
<g id="b-gear" transform="translate(152.8 432.5)">
 <path id="gearp" fill="#f3f3f3" stroke="#333" stroke-width="1.1" stroke-linejoin="round" d="M5.22 -1.39 L7.10 -1.22 L7.10 1.22 L5.22 1.39 L4.67 2.71 L5.88 4.16 L4.16 5.88 L2.71 4.67 L1.39 5.22 L1.22 7.10 L-1.22 7.10 L-1.39 5.22 L-2.71 4.67 L-4.16 5.88 L-5.88 4.16 L-4.67 2.71 L-5.22 1.39 L-7.10 1.22 L-7.10 -1.22 L-5.22 -1.39 L-4.67 -2.71 L-5.88 -4.16 L-4.16 -5.88 L-2.71 -4.67 L-1.39 -5.22 L-1.22 -7.10 L1.22 -7.10 L1.39 -5.22 L2.71 -4.67 L4.16 -5.88 L5.88 -4.16 L4.67 -2.71 Z"/>
 <circle r="2.4" fill="none" stroke="#333" stroke-width="1.1"/>
</g>

<!-- ===== status bar ===== -->
<g id="s-db">
 <rect x="545.6" y="459.8" width="7.8" height="6.8" fill="#e6eef9" stroke="#8e99ab" stroke-width="0.8"/>
 <rect x="546" y="460.2" width="7" height="1.5" fill="#8fb2e4"/>
 <rect x="542.4" y="462.2" width="8" height="6.8" fill="#cfe0f6" stroke="#7d8798" stroke-width="0.8"/>
 <rect x="542.8" y="462.6" width="7.2" height="1.7" fill="#4f8ad8"/>
 <rect x="544" y="465.4" width="4.8" height="2.4" fill="#79a8e8"/>
</g>
<g fill="#a6a6a6">
 <rect x="630.4" y="467.8" width="1.5" height="1.5"/><rect x="634.2" y="467.8" width="1.5" height="1.5"/>
 <rect x="630.4" y="471.6" width="1.5" height="1.5"/><rect x="634.2" y="471.6" width="1.5" height="1.5"/>
</g>
</svg>

<div class="a" style="left:0;top:31px;width:1px;height:449px;background:#0067c0"></div>
<div class="a" style="left:639px;top:31px;width:1px;height:449px;background:#0067c0"></div>
<div class="a" style="left:0;top:478.5px;width:640px;height:1.5px;background:#0067c0"></div>
</body></html>
